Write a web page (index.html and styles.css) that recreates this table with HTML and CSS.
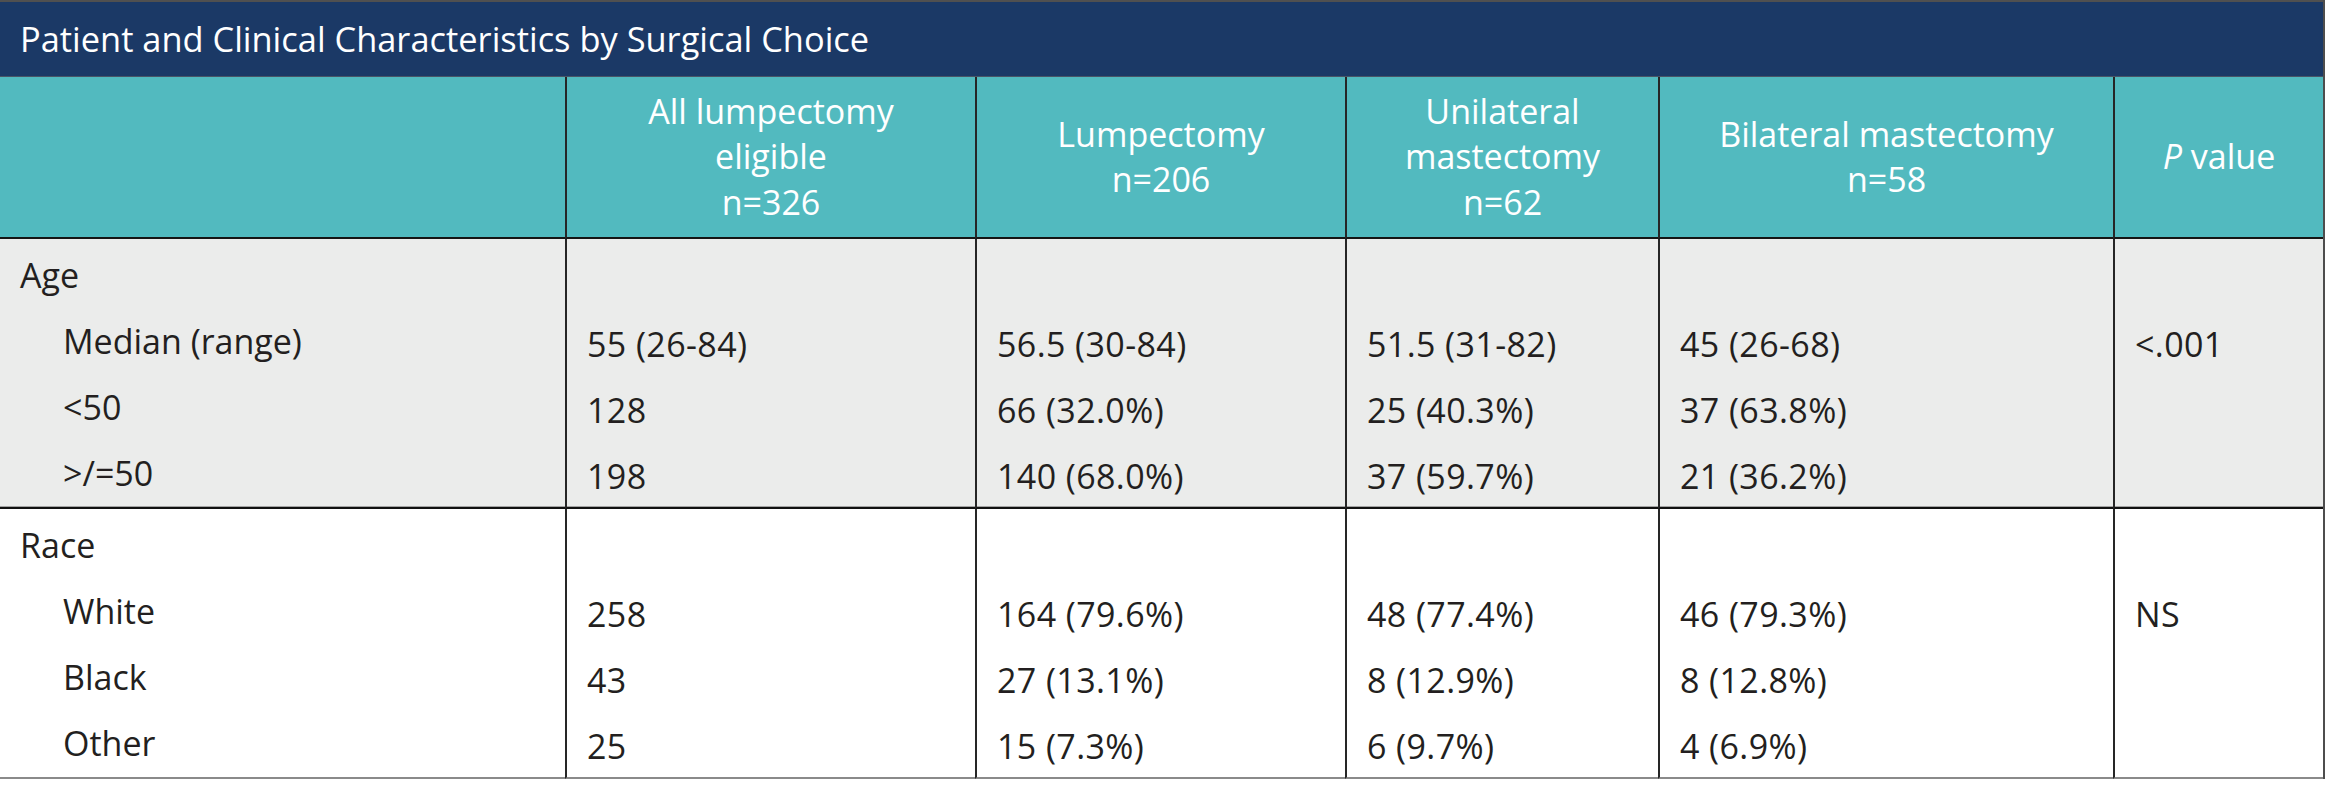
FILE: index.html
```html
<!DOCTYPE html>
<html lang="en">
<head>
<meta charset="utf-8">
<title>Patient and Clinical Characteristics by Surgical Choice</title>
<link rel="stylesheet" href="styles.css">
</head>
<body>
<div class="figure">
  <div class="title">Patient and Clinical Characteristics by Surgical Choice</div>
  <table class="data">
    <colgroup>
      <col class="c-label"><col class="c-all"><col class="c-lump"><col class="c-uni"><col class="c-bi"><col class="c-p">
    </colgroup>
    <thead>
      <tr>
        <th class="lbl"></th>
        <th>All lumpectomy<br>eligible<br>n=326</th>
        <th>Lumpectomy<br>n=206</th>
        <th>Unilateral<br>mastectomy<br>n=62</th>
        <th>Bilateral mastectomy<br>n=58</th>
        <th><i>P</i> value</th>
      </tr>
    </thead>
    <tbody class="grp shaded">
      <tr class="first"><td class="lbl">Age</td><td></td><td></td><td></td><td></td><td></td></tr>
      <tr><td class="lbl sub">Median (range)</td><td>55 (26-84)</td><td>56.5 (30-84)</td><td>51.5 (31-82)</td><td>45 (26-68)</td><td>&lt;.001</td></tr>
      <tr><td class="lbl sub">&lt;50</td><td>128</td><td>66 (32.0%)</td><td>25 (40.3%)</td><td>37 (63.8%)</td><td></td></tr>
      <tr class="last"><td class="lbl sub">&gt;/=50</td><td>198</td><td>140 (68.0%)</td><td>37 (59.7%)</td><td>21 (36.2%)</td><td></td></tr>
    </tbody>
    <tbody class="grp final">
      <tr class="first"><td class="lbl">Race</td><td></td><td></td><td></td><td></td><td></td></tr>
      <tr><td class="lbl sub">White</td><td>258</td><td>164 (79.6%)</td><td>48 (77.4%)</td><td>46 (79.3%)</td><td>NS</td></tr>
      <tr><td class="lbl sub">Black</td><td>43</td><td>27 (13.1%)</td><td>8 (12.9%)</td><td>8 (12.8%)</td><td></td></tr>
      <tr class="last"><td class="lbl sub">Other</td><td>25</td><td>15 (7.3%)</td><td>6 (9.7%)</td><td>4 (6.9%)</td><td></td></tr>
    </tbody>
  </table>
</div>
</body>
</html>
```
FILE: styles.css
```css
html, body {
  margin: 0;
  padding: 0;
  background: #ffffff;
}

body {
  font-family: "Open Sans", "Liberation Sans", sans-serif;
  font-size: 34px;
  color: #231f20;
}

.figure {
  width: 2323px;
  border-right: 2px solid #4d4d4d;
}

.title {
  height: 74px;
  line-height: 74px;
  padding-left: 20px;
  font-size: 34.4px;
  background: #1b3966;
  color: #ffffff;
  border-top: 2px solid #505050;
  border-bottom: 1px solid #4a5566;
  white-space: nowrap;
}

.data {
  width: 2323px;
  table-layout: fixed;
  border-collapse: separate;
  border-spacing: 0;
}

.c-label { width: 565px; }
.c-all { width: 410px; }
.c-lump { width: 370px; }
.c-uni { width: 313px; }
.c-bi { width: 455px; }
.c-p { width: 210px; }

.data th,
.data td {
  padding: 0;
  border-left: 2px solid #262626;
  white-space: nowrap;
}

.data th.lbl,
.data td.lbl {
  border-left: none;
}

.data thead th {
  height: 162px;
  box-sizing: border-box;
  background: #52babf;
  color: #ffffff;
  font-weight: normal;
  text-align: center;
  vertical-align: middle;
  line-height: 45.5px;
  border-bottom: 2px solid #151515;
}

.data thead th i {
  font-style: italic;
}

.data td {
  height: 66px;
  box-sizing: border-box;
  vertical-align: top;
  line-height: 60px;
  padding: 6px 0 0 20px;
  letter-spacing: 0.4px;
}

.data td.lbl {
  line-height: 66px;
  padding: 0 0 0 20px;
  letter-spacing: 0;
}

.data td.sub {
  padding-left: 63px;
}

.data tr.first td {
  height: 69px;
  padding-top: 3px;
}

.data tr.last td {
  height: 69px;
}

.shaded td {
  background: #ebeceb;
}

.shaded tr.last td {
  border-bottom: 2px solid #111111;
  box-shadow: inset 0 -1px 0 #a3a3a3;
}

.final tr.last td {
  border-bottom: 2px solid #8a8a8a;
}
```
